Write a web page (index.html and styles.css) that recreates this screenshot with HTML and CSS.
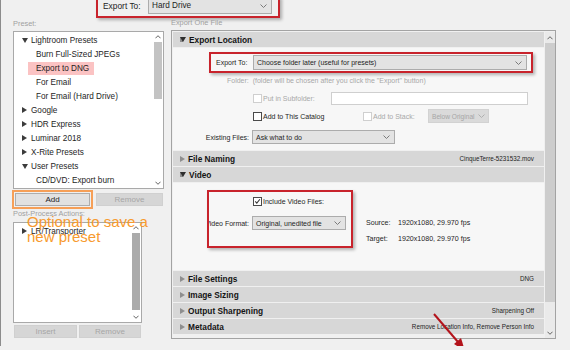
FILE: index.html
```html
<!DOCTYPE html>
<html>
<head>
    <title>Export One File</title>
    <link rel="stylesheet" href="styles.css">
</head>
<body>
<div class="page">
    <div class="topbar">
        <div class="callout callout-top">
            <span class="top-label">Export To:</span>
            <div class="select select-hd"><span>Hard Drive</span><svg class="chev" viewBox="0 0 7 4"><path d="M0.5 0.5 L3.5 3.5 L6.5 0.5"/></svg></div>
        </div>
    </div>

    <div class="columns">
        <!-- presets column -->
        <div class="left">
            <div class="cap">Preset:</div>
            <div class="listbox preset-box">
                <ul class="tree">
                    <li class="row"><i class="tri open"></i>Lightroom Presets</li>
                    <li class="row child"><span>Burn Full-Sized JPEGs</span></li>
                    <li class="row child"><span class="picked">Export to DNG</span></li>
                    <li class="row child"><span>For Email</span></li>
                    <li class="row child"><span>For Email (Hard Drive)</span></li>
                    <li class="row"><i class="tri"></i>Google</li>
                    <li class="row"><i class="tri"></i>HDR Express</li>
                    <li class="row"><i class="tri"></i>Luminar 2018</li>
                    <li class="row"><i class="tri"></i>X-Rite Presets</li>
                    <li class="row"><i class="tri open"></i>User Presets</li>
                    <li class="row child"><span>CD/DVD: Export burn</span></li>
                </ul>
                <div class="vscroll">
                    <div class="sarrow"><svg viewBox="0 0 7 4"><path d="M0.5 3.5 L3.5 0.5 L6.5 3.5"/></svg></div>
                    <div class="thumb thumb-preset"></div>
                    <div class="sfill"></div>
                    <div class="sarrow"><svg viewBox="0 0 7 4"><path d="M0.5 0.5 L3.5 3.5 L6.5 0.5"/></svg></div>
                </div>
            </div>
            <div class="btnrow">
                <button class="btn btn-add">Add</button>
                <button class="btn off btn-rm">Remove</button>
            </div>

            <div class="cap cap-post">Post-Process Actions:</div>
            <div class="listbox post-box">
                <ul class="tree">
                    <li class="row"><i class="tri"></i>LR/Transporter</li>
                </ul>
                <div class="vscroll">
                    <div class="sarrow"><svg viewBox="0 0 7 4"><path d="M0.5 3.5 L3.5 0.5 L6.5 3.5"/></svg></div>
                    <div class="thumb thumb-post"></div>
                    <div class="sfill"></div>
                    <div class="sarrow"><svg viewBox="0 0 7 4"><path d="M0.5 0.5 L3.5 3.5 L6.5 0.5"/></svg></div>
                </div>
            </div>
            <div class="btnrow btnrow-post">
                <button class="btn off btn-ins">Insert</button>
                <button class="btn off btn-rm2">Remove</button>
            </div>
        </div>

        <!-- export settings column -->
        <div class="right">
            <div class="cap cap-right">Export One File</div>
            <div class="panel">
                <div class="sections">
                    <div class="sec-head"><i class="tri open"></i><b>Export Location</b></div>
                    <div class="sec-body body-location">
                        <div class="callout callout-to">
                            <span class="to-label">Export To:</span>
                            <div class="select select-to"><span>Choose folder later (useful for presets)</span><svg class="chev" viewBox="0 0 7 4"><path d="M0.5 0.5 L3.5 3.5 L6.5 0.5"/></svg></div>
                        </div>
                        <div class="folder-note">Folder:&nbsp; (folder will be chosen after you click the "Export" button)</div>
                        <div class="frow frow-sub">
                            <div class="flabel"></div>
                            <label class="check-item sub-item"><i class="box off"></i><span class="dim">Put in Subfolder:</span></label>
                            <div class="textbox"></div>
                        </div>
                        <div class="frow frow-cat">
                            <div class="flabel"></div>
                            <label class="check-item cat-item"><i class="box"></i><span>Add to This Catalog</span></label>
                            <label class="check-item stack-item"><i class="box off"></i><span class="dim">Add to Stack:</span></label>
                            <div class="select off select-stack"><span>Below Original</span><svg class="chev" viewBox="0 0 7 4"><path d="M0.5 0.5 L3.5 3.5 L6.5 0.5"/></svg></div>
                        </div>
                        <div class="frow frow-exist">
                            <div class="flabel">Existing Files:</div>
                            <div class="select select-exist"><span>Ask what to do</span><svg class="chev" viewBox="0 0 7 4"><path d="M0.5 0.5 L3.5 3.5 L6.5 0.5"/></svg></div>
                        </div>
                    </div>

                    <div class="sec-head"><i class="tri"></i><b>File Naming</b><span class="sec-info">CinqueTerre-5231532.mov</span></div>
                    <div class="sec-head"><i class="tri open"></i><b>Video</b></div>
                    <div class="sec-body body-video">
                        <div class="callout callout-video">
                            <div class="vrow">
                                <div class="vlabel"></div>
                                <label class="check-item"><i class="box checked"><svg viewBox="0 0 9 9"><path d="M1.6 4.4 L3.6 6.6 L7.6 1.6"/></svg></i><span>Include Video Files:</span></label>
                            </div>
                            <div class="vrow vrow-format">
                                <div class="vlabel"><span>Video Format:</span></div>
                                <div class="select select-format"><span>Original, unedited file</span><svg class="chev" viewBox="0 0 7 4"><path d="M0.5 0.5 L3.5 3.5 L6.5 0.5"/></svg></div>
                            </div>
                        </div>
                        <div class="video-info">
                            <div class="info-row"><span class="info-key">Source:</span><span>1920x1080, 29.970 fps</span></div>
                            <div class="info-row"><span class="info-key">Target:</span><span>1920x1080, 29.970 fps</span></div>
                        </div>
                    </div>

                    <div class="sec-head"><i class="tri"></i><b>File Settings</b><span class="sec-info">DNG</span></div>
                    <div class="sec-head"><i class="tri"></i><b>Image Sizing</b></div>
                    <div class="sec-head"><i class="tri"></i><b>Output Sharpening</b><span class="sec-info">Sharpening Off</span></div>
                    <div class="sec-head"><i class="tri"></i><b>Metadata</b><span class="sec-info">Remove Location Info, Remove Person Info</span></div>
                </div>
                <div class="vscroll vscroll-panel">
                    <div class="sarrow sarrow-big"><svg viewBox="0 0 7 4"><path d="M0.5 3.5 L3.5 0.5 L6.5 3.5"/></svg></div>
                    <div class="thumb thumb-panel"></div>
                    <div class="sfill"></div>
                    <div class="sarrow sarrow-big"><svg viewBox="0 0 7 4"><path d="M0.5 0.5 L3.5 3.5 L6.5 0.5"/></svg></div>
                </div>
            </div>
        </div>
    </div>

    <!-- annotations drawn over the dialog -->
    <div class="note">Optional to save a<br>new preset</div>
    <svg class="pointer" viewBox="0 0 570 350">
        <line x1="433" y1="318" x2="457" y2="346"/>
        <polygon points="464,355 453,348 460,342"/>
    </svg>
</div>
</body>
</html>
```

FILE: styles.css
```css
* {
    box-sizing: border-box;
}

html,
body {
    margin: 0;
}

body {
    width: 570px;
    height: 350px;
    overflow: hidden;
    background-color: #f0f0f0;
    font-family: "Liberation Sans", Arial, sans-serif;
    font-size: 8.2px;
    color: #1e1e1e;
}

.page {
    position: relative;
    height: 350px;
    border-left: 1px solid #8c8c8c;
}

/* red annotation frames */
.callout {
    display: flex;
    align-items: center;
    border: 2px solid #c8232c;
    box-shadow: 2px 2px 3px rgba(0, 0, 0, 0.28);
}

.topbar {
    height: 21px;
}

.callout-top {
    width: 184px;
    height: 22px;
    margin: -4px 0 0 95px;
    padding: 0 6px 0 5px;
    align-items: flex-start;
}

.top-label {
    width: 45px;
    line-height: 17px;
    font-size: 8.4px;
}

.select {
    display: flex;
    align-items: center;
    justify-content: space-between;
    height: 15px;
    padding: 0 4px 0 3px;
    background-color: #e3e3e3;
    border: 1px solid #acacac;
    white-space: nowrap;
}

.select.off {
    background-color: #dadada;
    border-color: #d2d2d2;
    color: #a6a6a6;
}

.chev {
    flex: none;
    width: 7px;
    height: 4px;
    fill: none;
    stroke: #7a7a7a;
    stroke-width: 1;
}

.select-hd {
    width: 124px;
    height: 17px;
    margin-top: -1px;
}

.columns {
    display: flex;
    height: 329px;
}

.cap {
    height: 14px;
    line-height: 14px;
    font-size: 7.4px;
    color: #a0a0a0;
}

/* left column */
.left {
    width: 164px;
    padding-left: 12px;
}

.listbox {
    display: flex;
    background-color: #ffffff;
    border: 1px solid #a9a9a9;
}

.preset-box {
    width: 151px;
    height: 158px;
}

.tree {
    flex: 1;
    list-style: none;
    margin: 0;
    padding: 1px 0 0 0;
}

.row {
    display: flex;
    align-items: center;
    height: 14px;
    padding-left: 8px;
    white-space: nowrap;
}

.tri {
    width: 0;
    height: 0;
    margin-right: 4px;
    border-top: 3.5px solid transparent;
    border-bottom: 3.5px solid transparent;
    border-left: 5px solid #3c3c3c;
}

.tri.open {
    border-left: 3.5px solid transparent;
    border-right: 3.5px solid transparent;
    border-top: 5px solid #3c3c3c;
    border-bottom: 0;
    margin-right: 3px;
}

.row.child {
    padding-left: 14px;
}

.row.child span {
    height: 13px;
    line-height: 13px;
    padding: 0 5px 0 8px;
}

.row.child .picked {
    background-color: #fbc3c3;
}

.vscroll {
    display: flex;
    flex-direction: column;
    width: 10px;
}

.sarrow {
    display: flex;
    align-items: center;
    justify-content: center;
    height: 10px;
}

.sarrow svg {
    width: 6px;
    height: 4px;
    fill: none;
    stroke: #5a5a5a;
    stroke-width: 1.1;
}

.sarrow-big {
    height: 11px;
}

.thumb {
    margin: 0 1px;
    background-color: #c3c3c3;
}

.thumb-preset {
    height: 57px;
}

.thumb-post {
    height: 77px;
    background-color: #ababab;
}

.sfill {
    flex: 1;
}

.btnrow {
    display: flex;
    gap: 6px;
    height: 13px;
    margin-top: 4px;
}

.btn {
    height: 13px;
    padding: 0;
    font-family: inherit;
    font-size: 8px;
    color: #1e1e1e;
    background-color: #e1e1e1;
    border: 1px solid #adadad;
}

.btn.off {
    color: #a6a6a6;
    background-color: #d6d6d6;
    border-color: #d0d0d0;
}

.btn-add {
    width: 75px;
    margin-left: 2px;
    outline: 2px solid rgba(246, 150, 70, 0.9);
    outline-offset: 1px;
}

.btn-rm {
    width: 67px;
}

.cap-post {
    height: 16px;
    line-height: 16px;
}

.post-box {
    width: 129px;
    height: 101px;
}

.btnrow-post {
    gap: 2px;
    margin-top: 2px;
}

.btn-ins {
    width: 63px;
    margin-left: 1px;
}

.btn-rm2 {
    width: 62px;
}

/* right column */
.right {
    width: 385px;
    margin-left: 6px;
}

.cap-right {
    height: 13px;
    line-height: 12px;
}

.panel {
    display: flex;
    height: 309px;
    padding: 1px 0 0 1px;
    border: 1px solid #a3a3a3;
    background-color: #f0f0f0;
}

.sections {
    display: flex;
    flex-direction: column;
    width: 371px;
}

.sec-head {
    display: flex;
    align-items: center;
    flex: none;
    height: 15px;
    margin-bottom: 1px;
    padding: 0 10px 0 7px;
    background-color: #d7d7d7;
    white-space: nowrap;
}

.sec-head b {
    font-size: 8.3px;
    color: #141414;
}

.sec-head .tri {
    border-left-color: #8e8e8e;
    margin-right: 3px;
}

.sec-head .tri.open {
    border-top-color: #2e2e2e;
}

.sec-info {
    margin-left: auto;
    font-size: 6.3px;
    color: #1e1e1e;
}

.sec-body {
    flex: none;
    font-size: 7px;
    background-color: #f7f7f7;
}

.body-location {
    height: 102px;
    margin-bottom: 1px;
    padding-top: 4px;
}

.callout-to {
    width: 324px;
    height: 21px;
    margin-left: 36px;
    padding: 0 4px 0 5px;
}

.to-label {
    width: 37px;
}

.select-to {
    width: 274px;
}

.folder-note {
    height: 12px;
    line-height: 12px;
    margin-top: 2px;
    padding-left: 54px;
    color: #a8a8a8;
}

.frow {
    display: flex;
    align-items: center;
    gap: 4px;
    height: 14px;
}

.flabel {
    width: 76px;
    text-align: right;
}

.frow-sub {
    height: 13px;
    margin-top: 5px;
}

.frow-cat {
    margin-top: 4px;
}

.frow-exist {
    margin-top: 7px;
}

.check-item {
    display: flex;
    align-items: center;
    white-space: nowrap;
}

.box {
    width: 9px;
    height: 9px;
    margin-right: 1px;
    background-color: #ffffff;
    border: 1px solid #4a4a4a;
}

.box.off {
    border-color: #cfcfcf;
}

.box svg {
    display: block;
    width: 7px;
    height: 7px;
    fill: none;
    stroke: #333333;
    stroke-width: 1.3;
}

.dim {
    color: #a8a8a8;
}

.sub-item {
    width: 74px;
}

.textbox {
    width: 197px;
    height: 13px;
    background-color: #ffffff;
    border: 1px solid #cfcfcf;
}

.cat-item {
    width: 106px;
}

.stack-item {
    width: 61px;
}

.select-stack {
    width: 61px;
    height: 14px;
    padding: 0 3px 0 3px;
    font-size: 6.6px;
}

.select-stack .chev {
    stroke: #b0b0b0;
}

.select-exist {
    width: 143px;
    height: 14px;
    margin-left: -1px;
}

.body-video {
    display: flex;
    align-items: flex-start;
    height: 87px;
    margin-bottom: 1px;
}

.callout-video {
    flex-direction: column;
    align-items: stretch;
    width: 146px;
    height: 58px;
    margin: 7px 0 0 34px;
    padding-top: 3px;
    overflow: hidden;
}

.vrow {
    display: flex;
    align-items: center;
    gap: 4px;
    height: 12px;
}

.vlabel {
    display: flex;
    justify-content: flex-end;
    flex: none;
    width: 40px;
    white-space: nowrap;
}

.vrow-format {
    height: 14px;
    margin-top: 9px;
    gap: 3px;
}

.select-format {
    width: 94px;
    height: 14px;
}

.video-info {
    margin: 32px 0 0 13px;
}

.info-row {
    display: flex;
    height: 16px;
    line-height: 16px;
    font-size: 7.1px;
    white-space: nowrap;
}

.info-key {
    width: 32px;
}

.vscroll-panel {
    width: 10px;
    margin-left: 1px;
    background-color: #eaeaea;
}

.thumb-panel {
    height: 259px;
    margin: 0;
    background-color: #cdcdcd;
}

/* orange note and red arrow over the dialog */
.note {
    position: absolute;
    left: 26px;
    top: 218px;
    font-size: 15px;
    line-height: 15px;
    color: #f79a2e;
    white-space: nowrap;
}

.pointer {
    position: absolute;
    left: 0;
    top: 0;
    width: 570px;
    height: 350px;
    pointer-events: none;
}

.pointer line {
    stroke: #b3141c;
    stroke-width: 2;
}

.pointer polygon {
    fill: #b3141c;
}
```
